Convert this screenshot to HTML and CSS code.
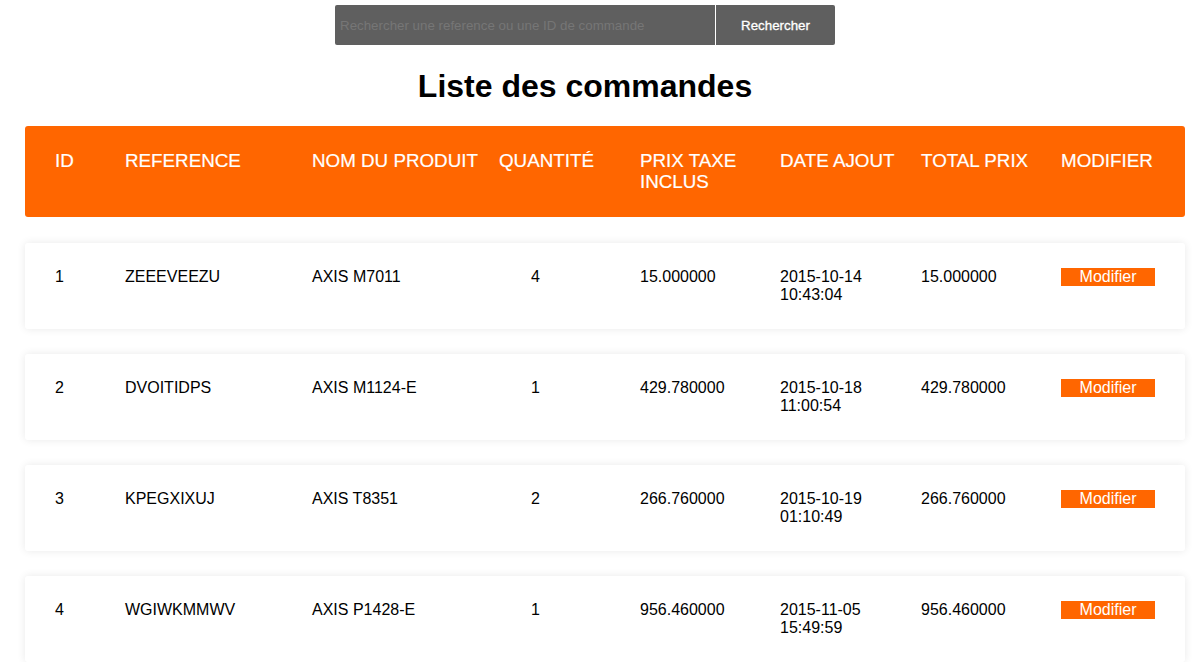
FILE: index.html
```html
<!DOCTYPE html>
<html lang="fr">
<head>
<meta charset="utf-8">
<title>Liste des commandes</title>
<link rel="stylesheet" href="styles.css">
</head>
<body>
<div class="top">
  <form class="search">
    <input class="search-input" type="text" placeholder="Rechercher une reference ou une ID de commande">
    <button class="search-btn" type="button">Rechercher</button>
  </form>
  <h1 class="title">Liste des commandes</h1>
</div>
<div class="orders">
  <div class="row head">
    <div>ID</div>
    <div>REFERENCE</div>
    <div>NOM DU PRODUIT</div>
    <div>QUANTITÉ</div>
    <div>PRIX TAXE INCLUS</div>
    <div>DATE AJOUT</div>
    <div>TOTAL PRIX</div>
    <div>MODIFIER</div>
  </div>
  <div class="row card">
    <div>1</div>
    <div>ZEEEVEEZU</div>
    <div>AXIS M7011</div>
    <div class="qty">4</div>
    <div>15.000000</div>
    <div>2015-10-14 10:43:04</div>
    <div>15.000000</div>
    <div><a class="edit" href="#">Modifier</a></div>
  </div>
  <div class="row card">
    <div>2</div>
    <div>DVOITIDPS</div>
    <div>AXIS M1124-E</div>
    <div class="qty">1</div>
    <div>429.780000</div>
    <div>2015-10-18 11:00:54</div>
    <div>429.780000</div>
    <div><a class="edit" href="#">Modifier</a></div>
  </div>
  <div class="row card">
    <div>3</div>
    <div>KPEGXIXUJ</div>
    <div>AXIS T8351</div>
    <div class="qty">2</div>
    <div>266.760000</div>
    <div>2015-10-19 01:10:49</div>
    <div>266.760000</div>
    <div><a class="edit" href="#">Modifier</a></div>
  </div>
  <div class="row card">
    <div>4</div>
    <div>WGIWKMMWV</div>
    <div>AXIS P1428-E</div>
    <div class="qty">1</div>
    <div>956.460000</div>
    <div>2015-11-05 15:49:59</div>
    <div>956.460000</div>
    <div><a class="edit" href="#">Modifier</a></div>
  </div>
</div>
</body>
</html>
```
FILE: styles.css
```css
html, body {
  margin: 0;
  padding: 0;
  background: #ffffff;
  font-family: "Liberation Sans", Arial, sans-serif;
  color: #000;
}

.top {
  width: 1170px;
  text-align: center;
}

.search {
  display: flex;
  width: 500px;
  height: 40px;
  margin: 5px auto 0;
  gap: 1px;
}

.search-input {
  width: 380px;
  height: 40px;
  box-sizing: border-box;
  border: none;
  border-radius: 2px 0 0 2px;
  background: #5f5f5f;
  padding: 0 5px;
  font-family: "Liberation Sans", Arial, sans-serif;
  font-size: 13.33px;
  color: #fff;
  outline: none;
}

.search-input::placeholder {
  color: #767676;
}

.search-btn {
  flex: 1;
  height: 40px;
  border: none;
  border-radius: 0 2px 2px 0;
  background: #5f5f5f;
  color: #fff;
  font-family: "Liberation Sans", Arial, sans-serif;
  font-size: 13.33px;
  font-weight: normal;
  -webkit-text-stroke: 0.3px #fff;
  padding: 0;
}

.title {
  margin: 23px 0 0;
  font-size: 32px;
  font-weight: bold;
  line-height: 37px;
}

.orders {
  width: 1160px;
  margin: 21px 0 0 25px;
}

.row {
  display: grid;
  grid-template-columns: 70px 187px 187px 141px 140px 141px 140px 1fr;
  padding-left: 30px;
  padding-right: 30px;
  border-radius: 3px;
}

.head {
  background: #ff6600;
  color: #fff;
  font-size: 18.8px;
  line-height: 21px;
  padding-top: 24px;
  padding-bottom: 25px;
  -webkit-text-stroke: 0.2px #fff;
}

.card {
  background: #fff;
  box-shadow: 0 0 8px rgba(0, 0, 0, 0.09);
  font-size: 16px;
  line-height: 18px;
  padding-top: 25px;
  padding-bottom: 25px;
  min-height: 36px;
  margin-top: 25px;
}

.head + .card {
  margin-top: 26px;
}

.qty {
  text-align: center;
  padding-right: 68px;
}

.edit {
  display: block;
  height: 18px;
  line-height: 18px;
  background: #ff6600;
  color: #fff;
  text-align: center;
  text-decoration: none;
  font-size: 16px;
}
```
